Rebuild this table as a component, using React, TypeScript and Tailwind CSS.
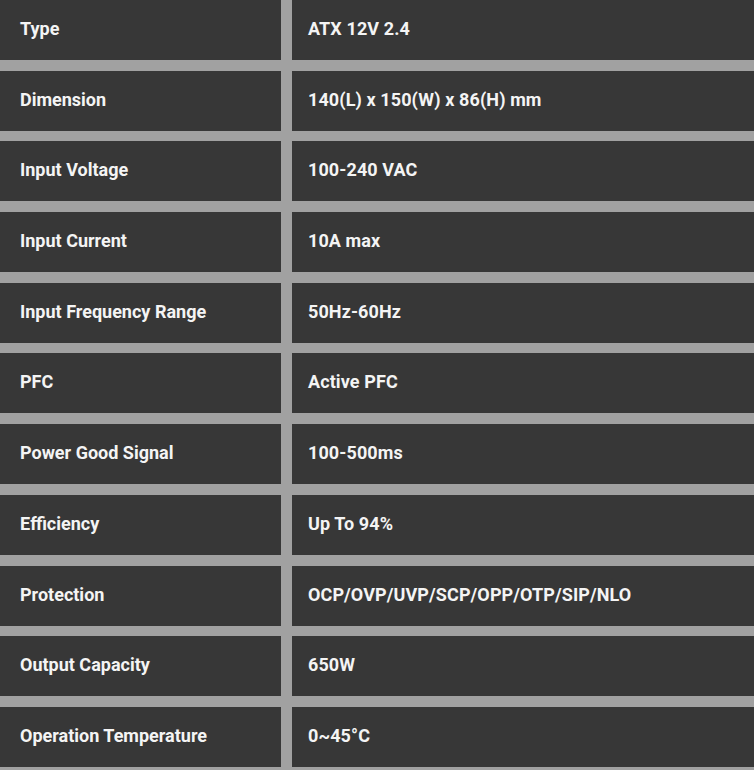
const specs = [
  ["Type", "ATX 12V 2.4"],
  ["Dimension", "140(L) x 150(W) x 86(H) mm"],
  ["Input Voltage", "100-240 VAC"],
  ["Input Current", "10A max"],
  ["Input Frequency Range", "50Hz-60Hz"],
  ["PFC", "Active PFC"],
  ["Power Good Signal", "100-500ms"],
  ["Efficiency", "Up To 94%"],
  ["Protection", "OCP/OVP/UVP/SCP/OPP/OTP/SIP/NLO"],
  ["Output Capacity", "650W"],
  ["Operation Temperature", "0~45°C"],
];

export default function App() {
  return (
    <div
      className="w-[754px] h-[770px] bg-[#a1a1a1] overflow-hidden"
      style={{ fontFamily: "Roboto, 'Liberation Sans', sans-serif" }}
    >
      <div className="grid grid-cols-[281px_1fr] gap-x-[11px] gap-y-[10.7px] text-[18px] font-bold text-[#f4f4f4]">
        {specs.map(([label, value]) => (
          <div key={label} className="contents">
            <div className="h-[60px] bg-[#373737] flex items-center pl-5 pb-[3px]">
              {label}
            </div>
            <div className="h-[60px] bg-[#373737] flex items-center pl-4 pb-[3px] tracking-[0.1px]">
              {value}
            </div>
          </div>
        ))}
      </div>
    </div>
  );
}
